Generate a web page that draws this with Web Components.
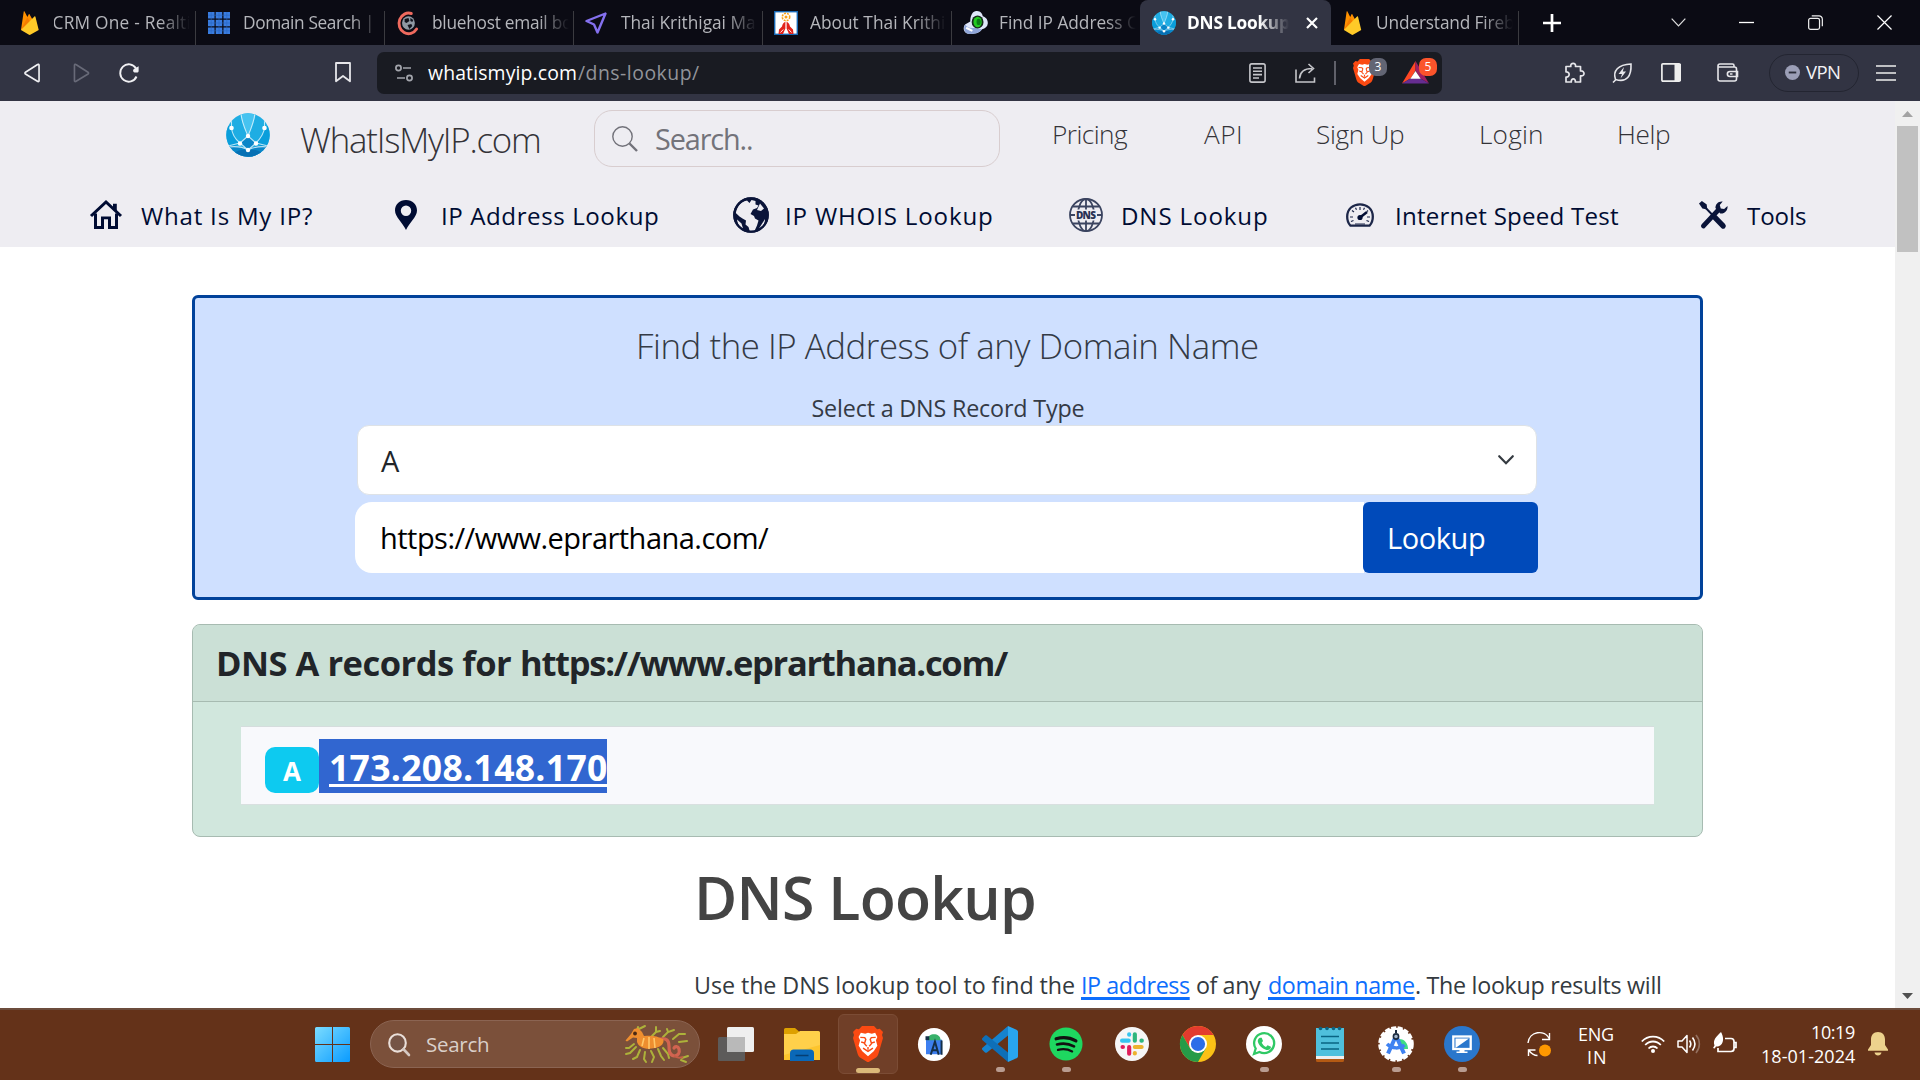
<!DOCTYPE html>
<html lang="en">
<head>
<meta charset="utf-8">
<title>DNS Lookup</title>
<style>
html,body{margin:0;width:1920px;height:1080px;overflow:hidden;background:#fff;font-family:"Open Sans","Noto Sans",sans-serif}
</style>
</head>
<body>
<app-desktop></app-desktop>
<script>
const FLAME = `<svg viewBox="0 0 20 24"><path fill="#ff9100" d="M1 19 3.8 .8c.1-.5.7-.6 1-.1L7.6 6 8.9 3.4c.2-.5.8-.5 1 0L17 16z"/><path fill="#f57c00" d="M1 19 7.600 6l3 5.600z"/><path fill="#ffca28" d="M1 19 14.800 5.500c.4-.4 1-.2 1.100.4L19.200 19 11 23.600c-.7.4-1.500.4-2.200 0z"/></svg>`;
const LION = `<path fill="#fff" d="M4.900 10.500 7 6.500l4 .9 2.500-.8 3.500.9 3-.9 2 3.900-1.300 3 1.300 5-3.300 5-5.200 4.500L8.300 23.500 5 18.500l1.300-5z" transform="translate(1.500 0)"/><path fill="none" stroke="#fb4a12" stroke-width="1.300" d="M8 10.800 12 11l1 1.500-1.200 4 2.100 2.300M22 10.800 18 11l-1 1.500 1.200 4-2.100 2.300M15 19.500v2.500M8.800 15l2.700.8M21.200 15l-2.700.8M10.500 20.500 15 23.500l4.500-3"/>`;
const ICONS = {
flame: FLAME,
grid: `<svg viewBox="0 0 22 22"><g fill="#3a7de0"><path d="M0 0h6.500v6.500H0zM7.700 0h6.500v6.500H7.700zM15.500 0H22v6.500h-6.500zM0 7.700h6.500v6.500H0zM7.700 7.700h6.500v6.500H7.700zM15.500 7.700H22v6.500h-6.500zM0 15.500h6.500V22H0zM7.700 15.500h6.500V22H7.700zM15.500 15.500H22V22h-6.500z"/></g><path stroke="#2a66c0" stroke-width=".6" d="M3.200 0v22M11 0v22M18.800 0v22M0 3.200h22M0 11h22M0 18.800h22"/></svg>`,
cglobe: `<svg viewBox="0 0 24 24"><path d="M16 2.500A10 10.300 0 1 0 21.500 18" fill="none" stroke="#ef6a5e" stroke-width="3" stroke-linecap="round"/><circle cx="13" cy="12" r="6.700" fill="#8f99a3"/><path d="M9 8l4-1 1 3-3 2-2-1zM12 14l4-1 1 2-3 3zM15 7l3 2-1 2-2-1z" fill="#11131c"/></svg>`,
send: `<svg viewBox="0 0 22 22"><path d="M20.500 1.500 1.500 9l7.500 3.500L12.500 20.500z" fill="none" stroke="#8470ee" stroke-width="2.400" stroke-linejoin="round"/></svg>`,
pray: `<svg viewBox="0 0 24 24"><rect x=".7" y=".7" width="22.600" height="22.600" fill="#fff" stroke="#1768b5" stroke-width="1.400"/><circle cx="12" cy="6" r="3.700" fill="none" stroke="#f6a01a" stroke-width="1.600" stroke-dasharray="2 1"/><circle cx="12" cy="6" r="1.500" fill="#f6a01a"/><path fill="#e2231a" d="M11.400 10.800C9.500 11.500 8.500 13 8 15.500L5 18.500 4.500 23H9l1.300-3 1.100-2.500zM12.600 10.800c1.900.7 2.900 2.200 3.400 4.700l3 3 .5 4.500H15l-1.300-3-1.100-2.500z"/><path stroke="#fff" stroke-width=".9" d="M6.500 21.500l2.800-3M17.500 21.500l-2.800-3" fill="none"/></svg>`,
webcam: `<svg viewBox="0 0 24 24"><path fill="#dfe7fa" d="M7 11C7 4 10 .5 13.500 1c3.500.3 5 2.500 5.500 5 3.500 1 5 4 4.800 7-.3 3-2.500 5-5.500 5.500C16 22 10 24 4 22.500 0 21 0 16.500 2 14z"/><path fill="#8fa5d8" d="M2 14c2 3 6 4 9 3l7 1.500C16 22 10 24 4 22.500 1 21 .5 17 2 14z"/><ellipse cx="14" cy="11.500" rx="5.700" ry="6.300" fill="#172a1c"/><ellipse cx="14" cy="11.500" rx="4" ry="5" fill="#22ca20"/><ellipse cx="15" cy="11.500" rx="2" ry="3" fill="#0a7d13"/><path d="M3 17l6 3" stroke="#fff" stroke-width="2"/></svg>`,
netglobe: `<svg viewBox="0 0 44 44"><clipPath id="c"><circle cx="22" cy="22" r="21.700"/></clipPath><g clip-path="url(#c)"><path fill="#1fade3" d="M0 0h44v44H0z"/><path fill="#46c3f0" d="M14 0C16 10 19 17 22 23 25 17 28 10 30 0z"/><path fill="#0a9edb" d="M0 12 5 14C6 20 9 26 14 30L7 35 0 30zM44 12l-5 2c-1 6-4 12-9 16l7 5 7-5z"/><path fill="#0a86c8" d="M14 30l8-7 8 7-8 7zM2 33c8-1 15 1 20 4 6-4 12-5 20-4l-6 11H8z"/><path fill="#0670b4" d="M8 40c4-3 9-4 14-3 5-1 10 0 14 3l-4 4H12z"/><path fill="none" stroke="#d8f2fc" stroke-width="1.100" opacity=".85" d="M5.500 7v7.500C6 21 9 26 14 30L22 37l8-7c5-5 8-10 8.500-15.500V7M15 0c.5 9 4 16 7 23 3-7 6-14 7-23M22 23l-8 7M22 23l8 7M2 34c8-1 15 0 20 3 6-3 12-4 20-3M14 30 2 33M30 30l12 3"/><g fill="#fff"><circle cx="5.500" cy="15" r="2.300"/><circle cx="38.500" cy="15" r="2.300"/><circle cx="22" cy="23" r="2.200"/><circle cx="14" cy="30.500" r="2.200"/><circle cx="30" cy="30.500" r="2.200"/><circle cx="22" cy="37" r="2.200"/></g></g></svg>`,
xbold: `<svg viewBox="0 0 12 12"><path d="M1 1l10 10M11 1 1 11" stroke="#fff" stroke-width="2.200"/></svg>`,
plus: `<svg viewBox="0 0 18 18"><path d="M9 0v18M0 9h18" stroke="#fff" stroke-width="2.700"/></svg>`,
chev: `<svg viewBox="0 0 16 10"><path d="M.7.7 8 8.700 15.300.7" fill="none" stroke="#ddd" stroke-width="1.300"/></svg>`,
min: `<svg viewBox="0 0 16 16"><path d="M0 8h16" stroke="#fff" stroke-width="1.400"/></svg>`,
restore: `<svg viewBox="0 0 16 16"><rect x=".7" y="3.700" width="11.600" height="11.600" rx="2" fill="none" stroke="#eee" stroke-width="1.300"/><path d="M4 1h7.500A3.500 3.500 0 0 1 15.300 4.500V12" fill="none" stroke="#eee" stroke-width="1.300"/></svg>`,
close: `<svg viewBox="0 0 16 16"><path d="M.5.5l15 15M15.500.5l-15 15" stroke="#fff" stroke-width="1.300"/></svg>`,
back: `<svg viewBox="0 0 17 20"><path d="M15.500 2.200v15.600c0 .8-.8 1-1.300.6L1.500 11c-.7-.5-.7-1.300 0-1.800L14 1.500c.7-.5 1.500-.1 1.500.7z" fill="none" stroke="#f0f0f3" stroke-width="1.700"/></svg>`,
fwd: `<svg viewBox="0 0 17 20"><path d="M1.500 2.200v15.600c0 .8.8 1 1.300.6L15.500 11c.7-.5.7-1.300 0-1.800L3 1.500c-.7-.5-1.500-.1-1.500.7z" fill="none" stroke="#686a78" stroke-width="1.700"/></svg>`,
reload: `<svg viewBox="0 0 20 20"><path d="M17.500 13.500A8.500 8.700 0 1 1 17 5.500" fill="none" stroke="#f0f0f3" stroke-width="1.900"/><path d="M19.600 3.300v4.800c0 1-.8 1.500-1.700 1.500h-1.500c-2.400 0-3-2-1.500-3.500z" fill="#f0f0f3"/></svg>`,
bookmark: `<svg viewBox="0 0 16 21"><path d="M1 1h14v18.300l-7-5.300-7 5.300z" fill="none" stroke="#e6e6ea" stroke-width="1.800" stroke-linejoin="round"/></svg>`,
tune: `<svg viewBox="0 0 18 18"><g fill="none" stroke="#a3a5ac" stroke-width="1.700"><circle cx="3.500" cy="4" r="2.600"/><path d="M8 4h8M2 14h8"/><circle cx="14.500" cy="14" r="2.600"/></g></svg>`,
reader: `<svg viewBox="0 0 17 20"><g fill="none" stroke="#c5c6ca" stroke-width="1.600"><rect x=".9" y=".9" width="15.200" height="18.200" rx="1.800"/><path d="M4 5h9M4 8.300h9M4 11.600h9M4 15h6"/></g></svg>`,
share: `<svg viewBox="0 0 21 20"><path d="M1 6.500V19h18.500v-4.500M4.500 15.500C5 9 9 5.500 17 5.500M13.500 1l5 4.500-5 4.500" fill="none" stroke="#c5c6ca" stroke-width="1.600"/></svg>`,
brave: `<svg viewBox="0 0 30 36"><path fill="#fb4a12" d="M9 0h12l3 3.300 2.800-.5L30 6l-1 3 1 3-4.500 15.500c-.6 2-1.700 3.500-3.300 4.600L16.500 35.500c-1 .7-2 .7-3 0l-5.700-3.400c-1.600-1.100-2.700-2.600-3.300-4.600L0 12l1-3-1-3 3.200-3.200 2.800.5z"/><g transform="translate(-1.500 -.5) scale(1.100)">${LION}</g></svg>`,
bat: `<svg viewBox="0 0 26 24"><path fill="#ff4724" d="M13 0 0 23.500 8.500 18 13 10z"/><path fill="#9e1f63" d="M13 0v10l4.500 8 8.500 5.500z"/><path fill="#662d91" d="M0 23.500 8.500 18h9l8.500 5.500z"/><path fill="#fff" d="M13 10.500 8 18.500h10z"/></svg>`,
puzzle: `<svg viewBox="0 0 21 21"><path d="M2 4.500h4.800c-1-4.300 5.700-4.300 4.700 0h5V9c4.700-.8 4.700 5.700 0 4.800V20h-5.200c.7-4.200-4.500-4.200-4 0H2v-5c4.200.5 4.200-5.500 0-5z" fill="none" stroke="#e6e6ea" stroke-width="1.700" stroke-linejoin="round"/></svg>`,
leaf: `<svg viewBox="0 0 20 20"><path d="M1 19.500 4.500 16M3.500 16.500C.5 8 6 1.500 19 1c.5 12-4 19-15.500 15.500z" fill="none" stroke="#e6e6ea" stroke-width="1.600"/><path fill="#e6e6ea" d="M12 4 6.500 11H10l-1.500 4.500 5.500-7h-3.200z"/></svg>`,
side: `<svg viewBox="0 0 20 19"><rect x=".9" y=".9" width="18.200" height="17.200" rx="1" fill="none" stroke="#eee" stroke-width="1.700"/><path fill="#eee" d="M13.500 1H20v17h-6.500z"/></svg>`,
wallet: `<svg viewBox="0 0 21 19"><g fill="none" stroke="#e6e6ea" stroke-width="1.600"><path d="M17 4V2.500C17 1.500 16.500 1 15.500 1H3C1.500 1 1 2 1 3v13c0 1.500.8 2 2 2h14.500c1.500 0 2-.7 2-2V6c0-1.500-.6-2-2-2H1.500M20.500 8.500H13c-3.500 0-3.500 5 0 5h7.500zM13 11h2.500"/></g></svg>`,
vpn: `<svg viewBox="0 0 16 16"><circle cx="8" cy="8" r="8" fill="#9c9fb7"/><path d="M4 8h8" stroke="#2b2d3a" stroke-width="2"/></svg>`,
menu: `<svg viewBox="0 0 20 16"><path d="M0 1h20M0 8h20M0 15h20" stroke="#eee" stroke-width="1.700"/></svg>`,
search: `<svg viewBox="0 0 26 26"><circle cx="10.500" cy="10.500" r="9.700" fill="none" stroke="#72727a" stroke-width="1.400"/><path d="M17.500 17.500 25 25" stroke="#72727a" stroke-width="2.400"/></svg>`,
home: `<svg viewBox="0 0 32 30"><g fill="none" stroke="#000c33" stroke-width="3"><path d="M1 16.500 16 2l15 14.500"/><path d="M5.500 14v14.400h7V18.500h7v9.900h7V14" /></g><path fill="#000c33" d="M23 4h3.800v9L23 9.500z"/></svg>`,
pin: `<svg viewBox="0 0 22 30"><path fill="#000c33" fill-rule="evenodd" d="M11 0c6.500 0 11 4.500 11 10.500C22 17 14 23 11 30 8 23 0 17 0 10.500 0 4.500 4.500 0 11 0zm0 5.500a5.200 5.200 0 1 0 0 10.400 5.200 5.200 0 0 0 0-10.400z"/></svg>`,
earth: `<svg viewBox="0 0 36 36"><circle cx="18" cy="18" r="17.800" fill="#0a1439"/><path fill="#eeedf2" d="M2.800 16C4 9.500 8 4.500 14 3.500l2.500 2.500 2-3 4 1 0 3.500 3 1-1.500 2.500-4 1.500-2.500 4.500 3.500 2 1 2.500 3.500 2-1.500 5-2.500 5.500-4.500 1-1.500-5-3-2.500.5-4-3.500-2L6.500 19.500zM27 6.500l4 5-3 2.500-4-1zM4 22.500l4.500 4 1.500 5C6 29.500 4.500 26.500 4 22.500zM32 22l-6 9.500c4-2 6-5 6-9.500z"/><circle cx="18" cy="18" r="16.700" fill="none" stroke="#0a1439" stroke-width="2.200"/></svg>`,
dns: `<svg viewBox="0 0 34 34"><g fill="none" stroke="#3b4460" stroke-width="1.800"><circle cx="17" cy="17" r="16"/><ellipse cx="17" cy="17" rx="8" ry="16"/><path d="M17 1v32M4 8.500h26M4 25.500h26M1 17h32"/></g><path fill="#eeedf2" d="M6 11.500h22v11H6z"/><text x="17" y="20.700" text-anchor="middle" textLength="20" font-family="Open Sans" font-size="10" font-weight="800" fill="#2a3355">DNS</text></svg>`,
gauge: `<svg viewBox="0 0 28 24"><path d="M4.500 22.700h19C28 18 28 9 23 4.500c-5-4.300-13-4.300-18 0C0 9 0 18 4.500 22.700z" fill="none" stroke="#1d2749" stroke-width="2.300"/><path d="M4 14h3M21 14h3M6 7.500l2 1.500M14 4v3M22 7.500l-1 1M9.500 4.800l1 2M18.500 4.800l-1 2M5 18.500l2.500-1M23 18.500l-2.500-1M9 21h10" stroke="#1d2749" stroke-width="1.200"/><path d="M14 14.500 21 9" stroke="#000c33" stroke-width="2.500"/><circle cx="14" cy="14.500" r="2.600" fill="#000c33"/></svg>`,
tools: `<svg viewBox="0 0 30 28"><path d="M4.500 25 20 9" stroke="#0a1439" stroke-width="4.800" stroke-linecap="round"/><path fill="#0a1439" d="M17 7c0-4 3-7 7.500-6.500L21.500 4l1 3.500 3.500.5 3.500-3C30 9.500 26.500 13 22 12.500z"/><path d="M16.500 16.500l8.500 8.500" stroke="#0a1439" stroke-width="5.400" stroke-linecap="round"/><path d="M5 5l9 9" stroke="#0a1439" stroke-width="2"/><path fill="#0a1439" d="M0 2.500 3 0l5 3.500.5 5-5-1z"/></svg>`,
chevsel: `<svg viewBox="0 0 16 10"><path d="M1.200 1.200 8 8.200l6.800-7" fill="none" stroke="#343a40" stroke-width="2.200" stroke-linecap="round"/></svg>`,
win: `<svg viewBox="0 0 35 35"><defs><linearGradient id="w" x1="0" y1="0" x2="1" y2="1"><stop offset="0" stop-color="#7bdcff"/><stop offset="1" stop-color="#0a9bff"/></linearGradient></defs><path fill="url(#w)" d="M1.500 0H17v17H0V1.500A1.500 1.500 0 0 1 1.500 0zM18 0h15.500A1.500 1.500 0 0 1 35 1.500V17H18zM0 18h17v17H1.500A1.500 1.500 0 0 1 0 33.500zM18 18h17v15.500a1.500 1.500 0 0 1-1.500 1.500H18z"/></svg>`,
tsearch: `<svg viewBox="0 0 22 22"><circle cx="9.500" cy="9.500" r="8.300" fill="#755446" stroke="#eadfd9" stroke-width="2.100"/><path d="M15.500 15.500 21 21" stroke="#d5c9c3" stroke-width="2.600" stroke-linecap="round"/></svg>`,
dragon: `<svg viewBox="0 0 64 38"><g stroke="#adb23a" stroke-width="2" fill="none" stroke-linecap="round"><path d="M12 6l1-4M14 4l6-3M27 11l4-4 4-1M31 7l0-5M38 12l5-5 6-2M43 7l-1-3M48 14l6-5 6 0M54 17l8-1M9 19l-5 4-3 0M11 22 5 28l-4 1M15 25l-3 7-4 2M20 27l-1 7 2 3M26 26l3 6-2 5M33 24l3 7 3 4M38 23l5 6 1 4M57 33l6-2M56 35l5 2"/></g><path d="M35 14c6-1 9 1 9 7 0 4 0 9 5 10 4 0 6-3 5-7-1-3-4-3-5-1" fill="none" stroke="#d26450" stroke-width="3.200" stroke-linecap="round"/><path d="M49 31c3 2 6 2 9 1" fill="none" stroke="#c55e48" stroke-width="2"/><path fill="#ee8e2f" d="M.5 15.500 6 9l3-5 4-1 4 4 2 4c8-1 13 0 19 3 2 4-2 8-8 9-9 2-16 0-18-6l0-4-4-.5-6 4z"/><path d="M19 13l-2 8M24 12v12M29 13l1 10" stroke="#ffc668" stroke-width="1.600"/><circle cx="10" cy="8.500" r="1.900" fill="#4b2913"/></svg>`,
taskview: `<svg viewBox="0 0 36 34"><rect y="10" width="27" height="24" rx="1.500" fill="#5d5b5a"/><rect x="9" width="27" height="25" rx="1.500" fill="#efefef"/><path fill="#b9b9b9" d="M9 10h18v15H10.500A1.500 1.500 0 0 1 9 23.500z"/></svg>`,
folder: `<svg viewBox="0 0 36 34"><path fill="#dda000" d="M0 2.500A1.500 1.500 0 0 1 1.500 1H11l4 3.500V12H0z"/><path fill="#ffd04a" d="M0 7h12l4-3h18.500A1.500 1.500 0 0 1 36 5.500V33H0z"/><path fill="#fbbb16" d="M0 28 36 18v15H0z" opacity=".55"/><path fill="#0a68b8" d="M6 34V26c0-2 1.500-3.500 3.500-3.500h17c2 0 3.500 1.500 3.500 3.500v8z"/><path d="M11.500 28.500h13" stroke="#053e73" stroke-width="1.500"/></svg>`,
astudio: `<svg viewBox="0 0 36 36"><circle cx="18" cy="18" r="17" fill="#fff"/><path fill="#3d7ff0" d="M9.500 13h17v15h-17z"/><path fill="#38b26b" d="M11 13.500c0-8 14-8 14 0zM12 6.500l2 3M24 6.500l-2 3"/><path fill="#153049" d="M9 9.500h4v4H9z"/><path fill="none" stroke="#153049" stroke-width="2.100" d="M14.500 28.500 19 15l4 13.500M16 24h6M26 14v14.500"/></svg>`,
vscode: `<svg viewBox="0 0 36 36"><path fill="#1583cf" d="M26 0v9.500L5 26.500c-.6.500-1.400.4-2-.1L.5 24c-.7-.7-.7-1.700 0-2.300z"/><path fill="#0e6fb8" d="M26 36v-9.500L5 9.500c-.6-.5-1.400-.4-2 .1L.5 12c-.7.7-.7 1.700 0 2.300z"/><path fill="#29a5ee" d="m26 0 8.500 3.700c1 .5 1.500 1.200 1.500 2.300v24c0 1.100-.5 1.800-1.500 2.300L26 36z"/></svg>`,
spotify: `<svg viewBox="0 0 36 36"><circle cx="18" cy="18" r="17.500" fill="#1ed760"/><g fill="none" stroke="#111" stroke-linecap="round"><path d="M7.500 12.500c7-2 15-1.200 21 2.200" stroke-width="3.300"/><path d="M8.500 18.500c6-1.700 12.500-1 18 2" stroke-width="2.800"/><path d="M9.500 24.200c5-1.300 10.500-.8 15 1.700" stroke-width="2.300"/></g></svg>`,
slack: `<svg viewBox="0 0 36 36"><circle cx="18" cy="18" r="18" fill="#f6f6f6"/><g stroke-width="4.400" stroke-linecap="round"><path stroke="#36c5f0" d="M7.500 14.500h7M15 7.800v.4"/><path stroke="#2eb67d" d="M21 7.800v6.700M28 14.500h.4"/><path stroke="#ecb22e" d="M21 21.200h7.200M21 27.500v.5"/><path stroke="#e01e5a" d="M15 21.200v7M8 21.200h.4"/></g></svg>`,
chrome: `<svg viewBox="0 0 36 36"><circle cx="18" cy="18" r="18" fill="#fbc116"/><path fill="#e33b2e" d="M2.400 9A18 18 0 0 1 33.600 9H18l-8 13z"/><path fill="#259b48" d="M2.400 9 10.200 22.500 18 27l8-5-8 14A18 18 0 0 1 2.400 9z"/><circle cx="18" cy="18" r="9" fill="#fff"/><circle cx="18" cy="18" r="7.100" fill="#2c6de8"/></svg>`,
whatsapp: `<svg viewBox="0 0 36 36"><circle cx="18" cy="18" r="18" fill="#fff"/><path d="M8 28l1.700-5.500A10 10 0 1 1 13.500 26z" fill="none" stroke="#2fc965" stroke-width="2.300"/><path fill="#2fc965" d="M14 11.700h1.700l1.300 3.400-1.300 1.700c1 2 2.300 3.200 4.300 4.200l1.500-1.800 3.500 1.600c-.1 2.500-2.500 3.700-4.500 3.100-4.700-1.300-8-5-8.700-8.400-.2-1.600.8-3.300 2.200-3.800z"/></svg>`,
notes: `<svg viewBox="0 0 28 36"><path fill="#b55a13" d="M0 30h28v4.500A1.500 1.500 0 0 1 26.500 36h-25A1.500 1.500 0 0 1 0 34.500z"/><path fill="#eee" d="M0 29h28v4H0z"/><path fill="#4fc0dc" d="M0 2h28v28H0z"/><path d="M5 10.500h18M5 17h18M5 23h18" stroke="#086483" stroke-width="1.700"/><g fill="#0b6382"><circle cx="4.500" cy="2.500" r="1.800"/><circle cx="11" cy="2.500" r="1.800"/><circle cx="17.500" cy="2.500" r="1.800"/><circle cx="23.500" cy="2.500" r="1.800"/></g></svg>`,
compass: `<svg viewBox="0 0 36 36"><circle cx="18" cy="18" r="16.300" fill="#fff" stroke="#fff" stroke-width="3" stroke-dasharray="5 1.500"/><path fill="#3ddc84" d="M21 13c6 0 9 5 9 10h-9z"/><path d="M17.500 11 10 27.500M18.500 11 26 27.500" stroke="#3f82f1" stroke-width="4"/><path d="M9 18c5 5 13 5 17.500 1" fill="none" stroke="#3f82f1" stroke-width="3.500"/><circle cx="18" cy="10.500" r="2.600" fill="#a6b7cc" stroke="#1b2b40" stroke-width="1.600"/><path d="M18 4v3" stroke="#1b2b40" stroke-width="2"/></svg>`,
monitor: `<svg viewBox="0 0 36 36"><circle cx="18" cy="18" r="18" fill="#2a77cc"/><rect x="9.300" y="10.500" width="17.400" height="12.500" fill="#2a77cc" stroke="#fff" stroke-width="2.300"/><path fill="#fff" d="M11.500 12.500H25L11.500 22zM15.500 23h5v2.500h3V27h-11v-1.500h3z"/></svg>`,
sync: `<svg viewBox="0 0 24 26"><path d="M1 12C2 0 18-2 22.500 8M22.500 2v6.500H15M1.500 25v-6h7M1.500 19c3 4 6 5.500 9 5.500" fill="none" stroke="#fff" stroke-width="1.400"/><circle cx="18" cy="19.500" r="6" fill="#ff9800"/></svg>`,
wifi: `<svg viewBox="0 0 24 18"><g fill="none" stroke="#fff" stroke-width="1.800"><path d="M.8 6.500c6-6.600 16.400-6.600 22.400 0M4.200 10c4.300-4.700 11.300-4.700 15.600 0M7.500 13.500c2.500-2.700 6.500-2.700 9 0"/></g><circle cx="12" cy="16" r="2" fill="#fff"/></svg>`,
sound: `<svg viewBox="0 0 24 20"><path d="M1 7h4l5-5.500v17L5 13H1z" fill="none" stroke="#fff" stroke-width="1.500" stroke-linejoin="round"/><path d="M12.500 6.500c1.500 2 1.500 5 0 7M15.500 3.500c3 4 3 9 0 13" fill="none" stroke="#fff" stroke-width="1.600"/><path d="M19 1c4.500 5.500 4.500 12.500 0 18" fill="none" stroke="#93705f" stroke-width="1.600"/></svg>`,
battery: `<svg viewBox="0 0 24 20"><path d="M12 4.500h6c2 0 3 1 3 3v7c0 2-1 3-3 3H5V14M21.500 8.500h1.500v5h-1.500" fill="none" stroke="#fff" stroke-width="1.700"/><path fill="#fff" d="M0 14 1.500 11.500C-.5 6 3 3 8-2c2.500 4 4 12.500-3 14.500l-2 0-1.300 2z"/></svg>`,
bell: `<svg viewBox="0 0 20 24"><path fill="#edd28d" d="M10 0c4.500 0 7 3 7 7.500V13l3 4.500v1.300H0v-1.300L3 13V7.500C3 3 5.500 0 10 0zM6.500 20.500h7C13 24.500 7 24.500 6.500 20.500z"/></svg>`,
up: `<svg viewBox="0 0 12 6"><path fill="#a3a3a3" d="M0 6 6 0l6 6z"/></svg>`,
down: `<svg viewBox="0 0 12 6"><path fill="#505050" d="M0 0l6 6 6-6z"/></svg>`
};

const define = (name, css, html) => customElements.define(name, class extends HTMLElement {
  constructor(){ super(); this.attachShadow({mode:'open'}).innerHTML = `<style>*{box-sizing:border-box}${css}</style>${html}`; }
});

/* Icon: w/h attributes give its box, l its left margin. */
customElements.define('ui-icon', class extends HTMLElement {
  connectedCallback(){
    if (this.shadowRoot) return;
    const a = n => this.getAttribute(n);
    this.attachShadow({mode:'open'}).innerHTML = `<style>:host{display:block;flex:none;width:${a('w')}px;height:${a('h')}px;margin-left:${a('l')||0}px}svg{display:block;width:100%;height:100%;overflow:visible}</style>` + ICONS[a('name')].replace('<svg ','<svg preserveAspectRatio="none" ');
  }
});

/* One line of text whose visible glyphs span exactly w pixels. */
const ctx = document.createElement('canvas').getContext('2d');
customElements.define('fit-text', class extends HTMLElement {
  connectedCallback(){
    if (this.shadowRoot) return;
    const a = n => this.getAttribute(n), t = this.textContent, w = +a('w');
    this.attachShadow({mode:'open'}).innerHTML = `<style>:host{display:block;flex:none;width:${w}px;margin-left:${a('l')||0}px;line-height:1;white-space:pre}span{display:inline-block}:host([u]) span{text-decoration:underline;text-decoration-thickness:var(--ut,2px);text-underline-offset:var(--uo,3px);text-decoration-skip-ink:none}</style><span><slot></slot></span>`;
    const cs = getComputedStyle(this);
    ctx.font = `${cs.fontWeight} ${cs.fontSize} ${cs.fontFamily}`;
    const m = ctx.measureText(t);
    const ls = t.length > 1 ? (w - m.actualBoundingBoxLeft - m.actualBoundingBoxRight) / (t.length - 1) : 0;
    const s = this.shadowRoot.querySelector('span');
    s.style.letterSpacing = ls + 'px';
    s.style.marginLeft = m.actualBoundingBoxLeft + 'px';
    s.style.marginRight = '-40px';
  }
});

define('browser-tab', `
:host{display:flex;flex:none;align-items:center;width:189px;height:45px;padding-left:var(--pl,19px);font-size:17.3px;color:#b5b6bb;background:linear-gradient(#3b3b40,#3b3b40) right bottom/1.500px 34px no-repeat}
:host([active]){background:#323443;border-radius:8px 8px 0 0;color:#fff;font-weight:700;width:191px}
:host([bare]){background:none}
.t{display:flex;align-items:center;flex:none;width:var(--tw,136px);height:30px;margin-left:var(--gap,14px);overflow:hidden;-webkit-mask-image:linear-gradient(90deg,#000 calc(100% - 30px),transparent)}`,
`<slot name="icon"></slot><div class="t"><slot></slot></div><slot name="end"></slot>`);

define('tab-strip', `:host{display:flex;align-items:center;height:45px;background:#0b0b14}`,
`<browser-tab style="width:196px;--pl:20px"><ui-icon slot="icon" name="flame" w="19.500" h="24"></ui-icon><fit-text w="137">CRM One - Realti</fit-text></browser-tab>
<browser-tab style="--pl:12px;--gap:14px;--tw:137px"><ui-icon slot="icon" name="grid" w="22" h="22"></ui-icon><fit-text w="127">Domain Search |</fit-text></browser-tab>
<browser-tab style="--pl:11px;--gap:14px"><ui-icon slot="icon" name="cglobe" w="23" h="24"></ui-icon><fit-text w="139">bluehost email bo</fit-text></browser-tab>
<browser-tab style="--pl:11px;--gap:14px"><ui-icon slot="icon" name="send" w="22" h="22"></ui-icon><fit-text w="134">Thai Krithigai Ma</fit-text></browser-tab>
<browser-tab style="--pl:11px;--gap:12px"><ui-icon slot="icon" name="pray" w="24" h="24"></ui-icon><fit-text w="135">About Thai Krithi</fit-text></browser-tab>
<browser-tab bare style="width:188px;--pl:11px;--gap:12px"><ui-icon slot="icon" name="webcam" w="25" h="25" style="margin-top:-1px"></ui-icon><fit-text w="138">Find IP Address C</fit-text></browser-tab>
<browser-tab active style="--pl:12px;--gap:12px;--tw:101px"><ui-icon slot="icon" name="netglobe" w="24" h="24"></ui-icon><fit-text w="102">DNS Lookup</fit-text><ui-icon slot="end" name="xbold" w="12" h="12" l="17"></ui-icon></browser-tab>
<browser-tab style="--pl:12px;--gap:15px;width:188px"><ui-icon slot="icon" name="flame" w="19" h="24"></ui-icon><fit-text w="137">Understand Fireb</fit-text></browser-tab>
<ui-icon name="plus" w="18" h="18" l="24"></ui-icon><ui-icon name="chev" w="15" h="9" l="110"></ui-icon><ui-icon name="min" w="15" h="15" l="53"></ui-icon><ui-icon name="restore" w="15" h="15" l="54"></ui-icon><ui-icon name="close" w="15" h="15" l="54"></ui-icon>`);

define('count-badge', `:host{display:flex;position:absolute;align-items:center;justify-content:center;width:18px;height:18px;border-radius:7px;font-size:12px;line-height:1;color:#fff;top:-1px;left:16px;background:var(--bg)}`, `<slot></slot>`);

define('address-bar', `:host{display:flex;align-items:center;flex:none;width:1065px;height:42px;margin-left:25px;border-radius:7px;background:#191b22;font-size:19.400px;color:#fff}
.path{color:#92949a}.sep{width:2px;height:24px;background:#60616a;margin-left:18px}.b{position:relative;flex:none}`,
`<ui-icon name="tune" w="18" h="18" l="18"></ui-icon><fit-text w="148" l="15">whatismyip.com</fit-text><fit-text class="path" w="121" l="2">/dns-lookup/</fit-text>
<ui-icon name="reader" w="17" h="20" l="550"></ui-icon><ui-icon name="share" w="21" h="20" l="29"></ui-icon><div class="sep"></div>
<div class="b" style="margin-left:17px"><ui-icon name="brave" w="23" h="27"></ui-icon><count-badge style="--bg:#626574">3</count-badge></div>
<div class="b" style="margin-left:26px"><ui-icon name="bat" w="27" h="23"></ui-icon><count-badge style="--bg:#fb542b;top:-3px;left:17px">5</count-badge></div>`);

define('tool-bar', `:host{display:flex;align-items:center;height:56px;padding-bottom:1px;background:#323443}
.vpn{display:flex;align-items:center;flex:none;width:90px;height:38px;margin-left:31px;border:1.500px solid #232531;border-radius:19px;font-size:18.500px;color:#f2f2f5}`,
`<ui-icon name="back" w="16.500" h="20" l="24"></ui-icon><ui-icon name="fwd" w="16.500" h="20" l="32"></ui-icon><ui-icon name="reload" w="20" h="20" l="30"></ui-icon><ui-icon name="bookmark" w="16" h="21" l="196"></ui-icon>
<address-bar style="margin-left:26px"></address-bar>
<ui-icon name="puzzle" w="21" h="21" l="122"></ui-icon><ui-icon name="leaf" w="20" h="20" l="27"></ui-icon><ui-icon name="side" w="20" h="19" l="29"></ui-icon><ui-icon name="wallet" w="21" h="19" l="36"></ui-icon>
<div class="vpn"><ui-icon name="vpn" w="15" h="15" l="15"></ui-icon><fit-text w="34" l="6">VPN</fit-text></div><ui-icon name="menu" w="20" h="16" l="17"></ui-icon>`);

define('nav-item', `:host{display:flex;align-items:center;flex:none}`, `<slot></slot>`);

define('site-header', `:host{display:block;height:146px;background:#eeedf2;color:#000c33}
.top{display:flex;align-items:center;height:75px;color:#343338}
.box{display:flex;align-items:center;width:406px;height:57px;border:1px solid #d8cdcf;border-radius:18px;margin-left:54px;font-size:28.800px;color:#73737a}
.links{display:flex;margin-bottom:9px;font-size:26.200px;font-weight:300}
nav{display:flex;align-items:center;height:71px;padding-top:6px;font-size:24.100px}nav fit-text{margin-top:3px}`,
`<div class="top"><ui-icon name="netglobe" w="44" h="44" l="226" style="margin-bottom:7px"></ui-icon><fit-text w="239" l="30" style="font-size:34.800px;font-weight:300;margin-top:3px">WhatIsMyIP.com</fit-text>
<div class="box" style="margin-left:55px"><ui-icon name="search" w="26" h="26" l="17"></ui-icon><fit-text w="96" l="18" style="margin-top:2px">Search..</fit-text></div>
<div class="links"><fit-text w="74" l="54">Pricing</fit-text><fit-text w="36" l="76">API</fit-text><fit-text w="87" l="77">Sign Up</fit-text><fit-text w="61" l="77">Login</fit-text><fit-text w="51" l="77">Help</fit-text></div></div>
<nav><nav-item><ui-icon name="home" w="32" h="29" l="90"></ui-icon><fit-text w="171" l="19">What Is My IP?</fit-text></nav-item>
<nav-item><ui-icon name="pin" w="22" h="30" l="83"></ui-icon><fit-text w="215" l="26">IP Address Lookup</fit-text></nav-item>
<nav-item><ui-icon name="earth" w="36" h="36" l="75"></ui-icon><fit-text w="205" l="18">IP WHOIS Lookup</fit-text></nav-item>
<nav-item><ui-icon name="dns" w="34" h="34" l="77"></ui-icon><fit-text w="144" l="20">DNS Lookup</fit-text></nav-item>
<nav-item><ui-icon name="gauge" w="28" h="24" l="79"></ui-icon><fit-text w="222" l="23">Internet Speed Test</fit-text></nav-item>
<nav-item><ui-icon name="tools" w="29" h="28" l="80"></ui-icon><fit-text w="59" l="19">Tools</fit-text></nav-item></nav>`);

define('lookup-panel', `:host{display:flex;flex-direction:column;align-items:center;width:1511px;height:305px;margin:48px 0 0 192px;padding-top:31px;border:3px solid #01429a;border-radius:6px;background:#cfe0ff;color:#343a45;box-sizing:border-box}
.sel{display:flex;align-items:center;width:1180px;height:70px;margin:5px 1px 0 0;border:1px solid #dee2e6;border-radius:12px;background:#fff;color:#212529;font-size:29px}
.form{display:flex;width:1183px;height:71px;margin:7px 2px 0 0;font-size:29px}
.in{display:flex;align-items:center;width:1009px;background:#fff;border-radius:17px 0 0 17px;color:#000}
.btn{display:flex;align-items:center;width:175px;margin-left:-1px;background:#004aba;color:#fff;border-radius:6px}`,
`<fit-text w="619" style="font-size:34.800px;font-weight:300;margin-left:2px">Find the IP Address of any Domain Name</fit-text>
<fit-text w="271" style="font-size:23.300px;margin-top:33px;margin-left:1px">Select a DNS Record Type</fit-text>
<div class="sel"><fit-text w="18" l="23">A</fit-text><ui-icon name="chevsel" w="16" h="10" l="1099"></ui-icon></div>
<div class="form"><div class="in"><fit-text w="387" l="27">https://www.eprarthana.com/</fit-text></div><div class="btn"><fit-text w="96" l="26">Lookup</fit-text></div></div>`);

define('record-card', `:host{display:block;width:1511px;height:213px;margin:24px 0 0 192px;border:1px solid #a7bbb1;border-radius:8px;background:#d1e7dd;color:#212529;font-weight:700;overflow:hidden;box-sizing:border-box}
.h{display:flex;align-items:center;height:77px;border-bottom:1px solid #a7bbb1;background:#cbe0d6;font-size:34.500px}
.row{display:flex;width:1413px;height:79px;margin:24px 0 0 48px;border-top:1px solid #d5dddd;border-bottom:1px solid #d9e0e0;background:#f8f9fc;color:#fff}
.badge{display:flex;align-items:center;width:54px;height:46px;margin:20px 0 0 24px;border-radius:10px;background:#0dcaf0;font-size:26px}
.s{display:flex;align-items:center;width:288px;height:54px;margin-top:12px;padding-top:4px;background:#3166d0;font-size:35.500px}`,
`<div class="h"><fit-text w="292" l="26">DNS A records for</fit-text><fit-text w="487" l="11">https://www.eprarthana.com/</fit-text></div>
<div class="row"><div class="badge"><fit-text w="19" l="18" style="margin-top:1px">A</fit-text></div><div class="s"><fit-text u w="275" l="12" style="--ut:3px;--uo:3px">173.208.148.170</fit-text></div></div>`);

define('page-article', `:host{display:block;padding-left:696px}
.h{display:flex;align-items:center;height:60px;margin-top:30px;font-size:59px;font-weight:600;color:#444}
p{display:flex;margin:47px 0 0;font-size:23.300px;color:#343a40}[u]{color:#0d6efd;--ut:2.500px;--uo:3px}`,
`<div class="h"><fit-text w="335" l="3">DNS Lookup</fit-text></div>
<p><fit-text w="378">Use the DNS lookup tool to find the</fit-text><fit-text u w="107" l="9">IP address</fit-text><fit-text w="64" l="7">of any</fit-text><fit-text u w="145" l="8">domain name</fit-text><fit-text w="244" l="2">. The lookup results will</fit-text></p>`);

define('scroll-bar', `:host{display:flex;flex-direction:column;align-items:center;flex:none;width:25px;height:907px;background:#f0f0f0}.th{width:21px;height:126px;background:#c1c1c1;margin:9px 0 auto}`,
`<ui-icon name="up" w="11" h="6" style="margin-top:10px"></ui-icon><div class="th"></div><ui-icon name="down" w="11" h="6" style="margin-bottom:9px"></ui-icon>`);

define('task-button', `:host{display:flex;position:relative;align-items:center;justify-content:center;flex:none;width:60px;height:60px;margin:0 3px;border-radius:6px;box-sizing:border-box}
:host([active]){background:#703f28;border:1px solid #7b4c35}
:host([run])::after{content:"";position:absolute;left:26px;bottom:2px;width:9px;height:5px;border-radius:3px;background:#b99c90}
:host([active])::after{content:"";position:absolute;left:17px;bottom:0;width:24px;height:5px;border-radius:3px;background:#dbb979}`, `<slot></slot>`);

define('task-bar', `:host{display:flex;align-items:center;height:72px;border-top:2px solid #6c4c3c;background:#643219;color:#fff;box-sizing:border-box;padding-bottom:2px}
.pill{display:flex;align-items:center;flex:none;width:330px;height:48px;margin:0 0 0 20px;border:1.500px solid #8b6452;border-radius:24px;background:#7b503a;font-size:20.500px;color:#dacfc9}
.col{display:flex;flex-direction:column;gap:5px;font-size:18px;flex:none;margin-top:3px}`,
`<ui-icon name="win" w="35" h="35" l="315"></ui-icon>
<div class="pill"><ui-icon name="tsearch" w="22" h="23" l="17"></ui-icon><fit-text w="61" l="17">Search</fit-text><ui-icon name="dragon" w="64" h="38" l="137"></ui-icon></div>
<div style="width:3px;flex:none"></div>
<task-button><ui-icon name="taskview" w="36" h="34"></ui-icon></task-button>
<task-button><ui-icon name="folder" w="36" h="34"></ui-icon></task-button>
<task-button active><ui-icon name="brave" w="30" h="36"></ui-icon></task-button>
<task-button><ui-icon name="astudio" w="34" h="35"></ui-icon></task-button>
<task-button run><ui-icon name="vscode" w="36" h="36"></ui-icon></task-button>
<task-button run><ui-icon name="spotify" w="34" h="34"></ui-icon></task-button>
<task-button><ui-icon name="slack" w="34" h="34"></ui-icon></task-button>
<task-button><ui-icon name="chrome" w="36" h="36"></ui-icon></task-button>
<task-button run><ui-icon name="whatsapp" w="36" h="36"></ui-icon></task-button>
<task-button><ui-icon name="notes" w="28" h="36"></ui-icon></task-button>
<task-button run><ui-icon name="compass" w="36" h="36"></ui-icon></task-button>
<task-button run><ui-icon name="monitor" w="36" h="36"></ui-icon></task-button>
<ui-icon name="sync" w="24" h="26" l="32"></ui-icon>
<div class="col" style="margin-left:28px"><fit-text w="34">ENG</fit-text><fit-text w="17" style="margin-left:9px">IN</fit-text></div>
<ui-icon name="wifi" w="24" h="18" l="28"></ui-icon><ui-icon name="sound" w="24" h="20" l="12"></ui-icon><ui-icon name="battery" w="24" h="20" l="12"></ui-icon>
<div class="col" style="margin-left:25px;margin-top:-1px;gap:6px"><fit-text w="43" style="margin-left:50px">10:19</fit-text><fit-text w="93">18-01-2024</fit-text></div>
<ui-icon name="bell" w="20" h="24" l="13"></ui-icon>`);

define('app-desktop', `:host{display:flex;flex-direction:column;width:1920px;height:1080px;overflow:hidden}.v{display:flex;height:907px;flex:none;overflow:hidden}main{flex:1;min-width:0;background:#fff}tab-strip,tool-bar,task-bar{flex:none}`,
`<tab-strip></tab-strip><tool-bar></tool-bar><div class="v"><main><site-header></site-header><lookup-panel></lookup-panel><record-card></record-card><page-article></page-article></main><scroll-bar></scroll-bar></div><task-bar></task-bar>`);
</script>
</body>
</html>
